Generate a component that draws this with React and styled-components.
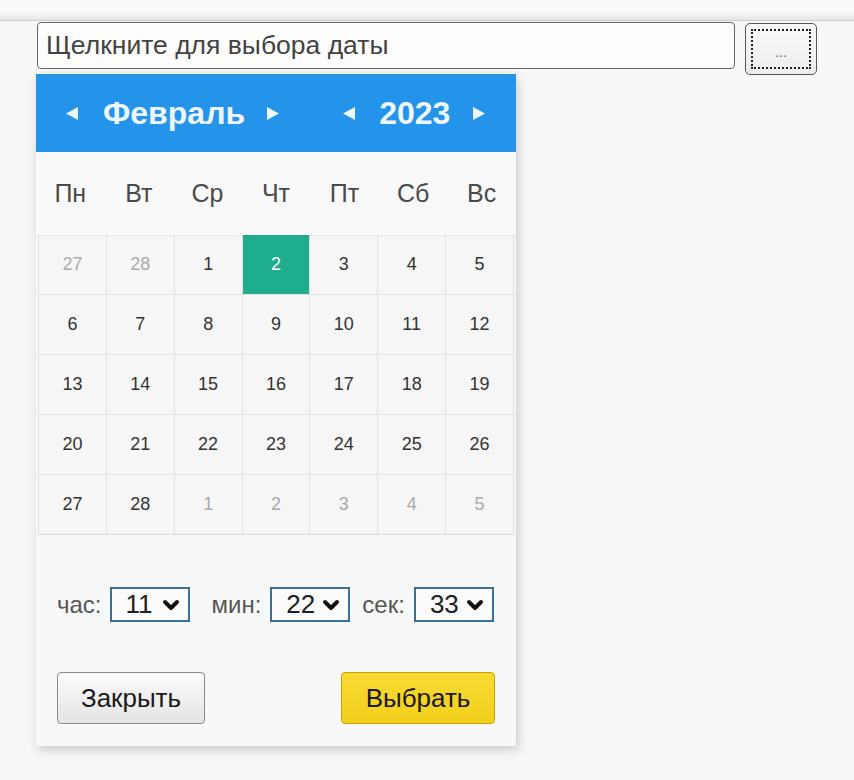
import React from "react";
import styled, { createGlobalStyle } from "styled-components";
import { ChevronDown } from "lucide-react";

const GlobalStyle = createGlobalStyle`
  html, body { margin: 0; padding: 0; }
  body {
    background: #f7f7f7;
    font-family: "Liberation Sans", Arial, sans-serif;
    color: #333;
  }
`;

const Page = styled.div`
  width: 854px;
  height: 780px;
  overflow: hidden;
`;

const TopBar = styled.div`
  height: 20px;
  background: linear-gradient(#f9f9f9 0%, #f9f9f9 55%, #e6e6e6 100%);
  border-bottom: 1px solid #cdcdcd;
`;

const InputRow = styled.div`
  box-sizing: border-box;
  height: 48px;
  display: flex;
  align-items: flex-start;
  gap: 10px;
  padding: 1px 0 0 37px;
`;

const DateInput = styled.div`
  box-sizing: border-box;
  width: 698px;
  height: 47px;
  border: 1px solid #666;
  border-radius: 4px;
  background: #fdfdfd;
  display: flex;
  align-items: center;
  padding-left: 8px;
  font-size: 26.5px;
  color: #444;
`;

const DotsButton = styled.div`
  box-sizing: border-box;
  flex-shrink: 0;
  width: 72px;
  height: 52px;
  margin-top: 1px;
  border: 1px solid #555;
  border-radius: 5px;
  background: linear-gradient(#fafafa, #ececec);
  padding: 5px;
  display: flex;
`;

const DotsInner = styled.div`
  flex: 1;
  border: 2px dotted #222;
  display: flex;
  align-items: center;
  justify-content: center;
  font-size: 14px;
  color: #666;
  padding-top: 6px;
`;

const Popup = styled.div`
  width: 480px;
  margin: 5px 0 0 36px;
  background: #f8f8f8;
  box-shadow: 2px 4px 10px rgba(0, 0, 0, 0.18);
`;

const Header = styled.div`
  height: 78px;
  background: #2394e9;
  display: flex;
  align-items: center;
  padding-left: 30px;
  color: #eef7ff;
`;

const Arrow = styled.svg`
  width: 12px;
  height: 13px;
  flex-shrink: 0;
  margin-left: ${(p) => p.$ml || 0}px;
  margin-right: ${(p) => p.$mr || 0}px;
`;

const HeaderTitle = styled.span`
  font-weight: bold;
  font-size: 32px;
  line-height: 1;
`;

const WeekRow = styled.div`
  display: grid;
  grid-template-columns: repeat(7, 1fr);
  height: 83px;
  align-items: center;
  background: #f9f9f9;
  box-shadow: 0 1px 2px rgba(0, 0, 0, 0.06);
  position: relative;
`;

const WeekDay = styled.div`
  text-align: center;
  font-size: 25px;
  color: #4a4a4a;
`;

const Grid = styled.div`
  display: grid;
  grid-template-columns: repeat(7, 1fr);
  grid-auto-rows: 60px;
  margin: 0 2px;
  border-left: 1px solid #e2e2e2;
`;

const Cell = styled.div`
  display: flex;
  align-items: center;
  justify-content: center;
  font-size: 18px;
  border-right: 1px solid #e2e2e2;
  border-bottom: 1px solid #e2e2e2;
  background: ${(p) => (p.$selected ? "#1fae8d" : "#f6f6f6")};
  color: ${(p) => (p.$selected ? "#ffffff" : p.$muted ? "#aaaaaa" : "#333333")};
`;

const Footer = styled.div`
  background: #f8f8f8;
  padding: 52px 21px 22px 21px;
  position: relative;
  box-shadow: 0 -1px 2px rgba(0, 0, 0, 0.05);
`;

const TimeRow = styled.div`
  display: flex;
  align-items: center;
`;

const TimeLabel = styled.span`
  font-size: 24px;
  color: #555;
  margin-right: ${(p) => p.$mr}px;
  margin-left: ${(p) => p.$ml || 0}px;
`;

const Select = styled.div`
  box-sizing: border-box;
  width: 80px;
  height: 35px;
  border: 2px solid #3d6f96;
  background: #fbfbfb;
  display: flex;
  align-items: center;
  justify-content: space-between;
  padding: 0 5px 0 14px;
  font-size: 26px;
  color: #222;
`;

const ButtonRow = styled.div`
  display: flex;
  justify-content: space-between;
  margin-top: 50px;
`;

const Button = styled.div`
  box-sizing: border-box;
  height: 52px;
  width: ${(p) => p.$w}px;
  border-radius: 4px;
  display: flex;
  align-items: center;
  justify-content: center;
  font-size: 26px;
  color: #1a1a1a;
  border: 1px solid ${(p) => (p.$primary ? "#c9a400" : "#8a8a8a")};
  background: ${(p) =>
    p.$primary
      ? "linear-gradient(#f8da32, #f1cf1c)"
      : "linear-gradient(#fbfbfb, #e4e4e4)"};
`;

const LeftTri = (props) => (
  <Arrow viewBox="0 0 12 13" {...props}>
    <polygon points="12,0 12,13 0,6.5" fill="#eef7ff" />
  </Arrow>
);

const RightTri = (props) => (
  <Arrow viewBox="0 0 12 13" {...props}>
    <polygon points="0,0 0,13 12,6.5" fill="#eef7ff" />
  </Arrow>
);

const weekDays = ["Пн", "Вт", "Ср", "Чт", "Пт", "Сб", "Вс"];

const days = [
  [27, true], [28, true], [1], [2, false, true], [3], [4], [5],
  [6], [7], [8], [9], [10], [11], [12],
  [13], [14], [15], [16], [17], [18], [19],
  [20], [21], [22], [23], [24], [25], [26],
  [27], [28], [1, true], [2, true], [3, true], [4, true], [5, true],
];

const Chevron = () => <ChevronDown size={24} strokeWidth={4} color="#111" />;

export default function App() {
  return (
    <Page>
      <GlobalStyle />
      <TopBar />
      <InputRow>
        <DateInput>Щелкните для выбора даты</DateInput>
        <DotsButton>
          <DotsInner>...</DotsInner>
        </DotsButton>
      </InputRow>
      <Popup>
        <Header>
          <LeftTri $mr={25} />
          <HeaderTitle>Февраль</HeaderTitle>
          <RightTri $ml={22} />
          <LeftTri $ml={64} $mr={24} />
          <HeaderTitle>2023</HeaderTitle>
          <RightTri $ml={23} />
        </Header>
        <WeekRow>
          {weekDays.map((d) => (
            <WeekDay key={d}>{d}</WeekDay>
          ))}
        </WeekRow>
        <Grid>
          {days.map(([n, muted, selected], i) => (
            <Cell key={i} $muted={muted} $selected={selected}>
              {n}
            </Cell>
          ))}
        </Grid>
        <Footer>
          <TimeRow>
            <TimeLabel $mr={8}>час:</TimeLabel>
            <Select>
              11 <Chevron />
            </Select>
            <TimeLabel $ml={22} $mr={9}>мин:</TimeLabel>
            <Select>
              22 <Chevron />
            </Select>
            <TimeLabel $ml={12} $mr={9}>сек:</TimeLabel>
            <Select>
              33 <Chevron />
            </Select>
          </TimeRow>
          <ButtonRow>
            <Button $w={148}>Закрыть</Button>
            <Button $w={154} $primary>Выбрать</Button>
          </ButtonRow>
        </Footer>
      </Popup>
    </Page>
  );
}
